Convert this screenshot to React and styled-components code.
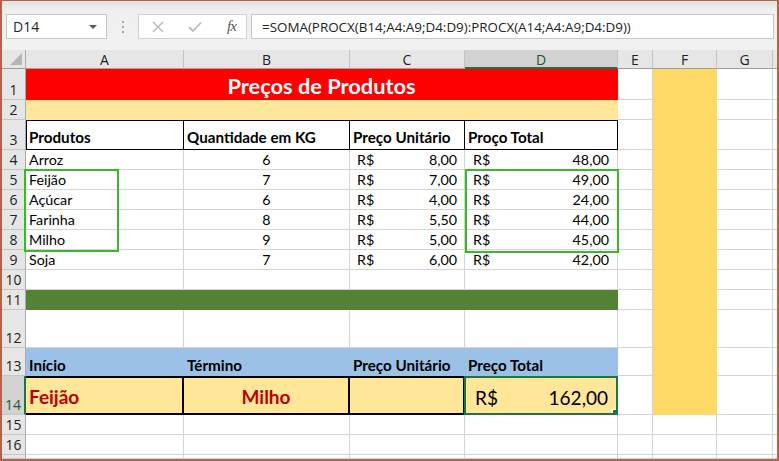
import React from "react";
import styled, { createGlobalStyle, css } from "styled-components";

const GlobalStyle = createGlobalStyle`
  html, body {
    margin: 0;
    padding: 0;
    background: #fff;
  }
  * {
    box-sizing: border-box;
  }
`;

const COL_W = [158, 166, 115, 153, 35, 64, 56];
const ROW_H = [31, 20, 30, 20, 20, 20, 20, 20, 20, 20, 20, 38, 28, 39, 20, 20];
const LETTERS = ["A", "B", "C", "D", "E", "F", "G", ""];
const GRID = "#d4d4d4";
const YELLOW = "#ffe699";
const GOLD = "#ffd966";
const BLUE = "#9bc2e6";
const XL_GREEN = "#217346";

const products = [
  ["Arroz", "6", "8,00", "48,00"],
  ["Feijão", "7", "7,00", "49,00"],
  ["Açúcar", "6", "4,00", "24,00"],
  ["Farinha", "8", "5,50", "44,00"],
  ["Milho", "9", "5,00", "45,00"],
  ["Soja", "7", "6,00", "42,00"],
];

// cell specs by sheet row; c = column index (0 = A)
const sheet = {
  1: [{ c: 0, span: 4, kind: "title", text: "Preços de Produtos" }],
  2: [{ c: 0, span: 4, kind: "fill", fill: YELLOW }],
  3: [
    { c: 0, kind: "head", text: "Produtos" },
    { c: 1, kind: "head", text: "Quantidade em KG" },
    { c: 2, kind: "head", text: "Preço Unitário" },
    { c: 3, kind: "head", text: "Proço Total" },
  ],
  11: [{ c: 0, span: 4, kind: "fill", fill: "#548235" }],
  13: [
    { c: 0, kind: "blue", text: "Início" },
    { c: 1, kind: "blue", text: "Término" },
    { c: 2, kind: "blue", text: "Preço Unitário" },
    { c: 3, kind: "blue", text: "Preço Total" },
  ],
  14: [
    { c: 0, kind: "pick", text: "Feijão" },
    { c: 1, kind: "pick", text: "Milho", center: true },
    { c: 2, kind: "pick", text: "" },
    { c: 3, kind: "total", value: "162,00" },
  ],
};

products.forEach(([name, qty, unit, total], i) => {
  sheet[4 + i] = [
    { c: 0, kind: "text", text: name },
    { c: 1, kind: "num", text: qty },
    { c: 2, kind: "money", value: unit },
    { c: 3, kind: "money", value: total, wide: true },
  ];
});

const Window = styled.div`
  width: 779px;
  height: 461px;
  border: 2px solid #b1644c;
  border-top-width: 1px;
  display: flex;
  flex-direction: column;
  overflow: hidden;
  background: #f0f0f0;
`;

const FormulaBar = styled.div`
  flex: none;
  height: 49px;
  display: flex;
  align-items: flex-start;
  padding: 13px 3px 0 4px;
  background: linear-gradient(#e2e2e2, #efefef 9px, #f1f1f1);
`;

const Box = styled.div`
  height: 25px;
  background: #fff;
  border: 1px solid #c6c6c6;
  display: flex;
  align-items: center;
  font-family: "Open Sans", "Noto Sans", sans-serif;
  font-size: 14px;
  color: #262626;
`;

const NameBox = styled(Box)`
  width: 101px;
  justify-content: space-between;
  padding: 0 9px 0 6px;
`;

const Caret = styled.span`
  width: 0;
  height: 0;
  border-left: 4px solid transparent;
  border-right: 4px solid transparent;
  border-top: 4px solid #5a5a5a;
`;

const Grip = styled.div`
  width: 2px;
  height: 25px;
  margin: 0 14px 0 15px;
  display: flex;
  flex-direction: column;
  justify-content: center;
  gap: 3px;
  span {
    width: 2px;
    height: 2px;
    background: #a8a8a8;
  }
`;

const FxBox = styled(Box)`
  width: 109px;
  border-color: #d2d2d2;
  padding-left: 13px;
  gap: 24px;
`;

const Fx = styled.span`
  font-family: "Liberation Serif", serif;
  font-style: italic;
  font-size: 15px;
  color: #555;
  margin-left: 1px;
  letter-spacing: -1px;
`;

const FormulaInput = styled(Box)`
  flex: 1;
  margin-left: 4px;
  padding-left: 10px;
  font-size: 13.4px;
  color: #222;
`;

const Sheet = styled.div`
  flex: 1;
  display: grid;
  grid-template-columns: 24px ${COL_W.map((w) => `${w}px`).join(" ")} 1fr;
  grid-template-rows: 19px ${ROW_H.map((h) => `${h}px`).join(" ")} 1fr;
  background: #fff;
  overflow: hidden;
`;

const Corner = styled.div`
  grid-row: 1;
  grid-column: 1;
  background: #e6e6e6;
  border-right: 1px solid #ababab;
  border-bottom: 1px solid #9f9f9f;
  display: flex;
  align-items: flex-end;
  justify-content: flex-end;
  padding: 0 3px 3px 0;
`;

const ColHead = styled.div`
  grid-row: 1;
  grid-column: ${(p) => p.$col};
  background: ${(p) => (p.$sel ? "#d2d2d2" : "#e6e6e6")};
  border-right: 1px solid #c4c4c4;
  border-bottom: ${(p) => (p.$sel ? `2px solid ${XL_GREEN}` : "1px solid #9f9f9f")};
  display: flex;
  align-items: center;
  justify-content: center;
  padding-top: ${(p) => (p.$sel ? "1px" : "0")};
  font-family: "Open Sans", "Noto Sans", sans-serif;
  font-size: 14px;
  color: ${(p) => (p.$sel ? "#1e5631" : "#222")};
  overflow: hidden;
`;

const RowHead = styled.div`
  grid-row: ${(p) => p.$row};
  grid-column: 1;
  background: ${(p) => (p.$sel ? "#d2d2d2" : "#e6e6e6")};
  border-right: ${(p) => (p.$sel ? `2px solid ${XL_GREEN}` : "1px solid #ababab")};
  border-bottom: 1px solid #c6c6c6;
  display: flex;
  align-items: flex-end;
  justify-content: center;
  font-family: "Open Sans", "Noto Sans", sans-serif;
  font-size: 14px;
  line-height: 18px;
  color: ${(p) => (p.$sel ? "#1e5631" : "#222")};
  overflow: hidden;
`;

const edges = {
  box: css`
    border-right: 1px solid #000;
    border-bottom: 1px solid #000;
    box-shadow: inset ${(p) => (p.$first ? "1px" : "0")} 1px 0 #000;
  `,
  thick: css`
    border-right: 2px solid #000;
    border-bottom: 2px solid #000;
    box-shadow: inset 0 2px 0 #000;
  `,
  sel: css`
    position: relative;
    z-index: 1;
    margin-left: -1px;
    border: 2px solid ${XL_GREEN};
    &::after {
      content: "";
      position: absolute;
      right: -5px;
      bottom: -5px;
      width: 7px;
      height: 7px;
      background: ${XL_GREEN};
      border: 1px solid #fff;
    }
  `,
};

const Cell = styled.div`
  grid-row: ${(p) => p.$row};
  grid-column: ${(p) => p.$col} / span ${(p) => p.$span || 1};
  background: ${(p) => p.$fill || "#fff"};
  border-right: 1px solid ${(p) => p.$fill || GRID};
  border-bottom: 1px solid ${(p) => p.$fill || GRID};
  display: flex;
  align-items: ${(p) => (p.$middle ? "center" : "flex-end")};
  justify-content: ${(p) => p.$align || "flex-start"};
  gap: 8px;
  padding: ${(p) => p.$pad || "0 3px 1px 3px"};
  font-family: Lato, "Open Sans", sans-serif;
  font-size: ${(p) => p.$size || (p.$bold ? 15.2 : 14.3)}px;
  font-weight: ${(p) => (p.$bold ? 700 : 400)};
  color: ${(p) => p.$color || "#000"};
  white-space: nowrap;
  overflow: hidden;
  ${(p) => p.$edge && edges[p.$edge]}
`;

const Highlight = styled.div`
  grid-row: 6 / 10;
  grid-column: ${(p) => p.$col};
  justify-self: ${(p) => (p.$width ? "start" : "stretch")};
  width: ${(p) => (p.$width ? `${p.$width}px` : "auto")};
  margin: ${(p) => p.$margin};
  border: 2px solid #3db52c;
  position: relative;
  z-index: 2;
  pointer-events: none;
`;

const Triangle = () => (
  <svg width="12" height="12" viewBox="0 0 12 12">
    <polygon points="12,0 12,12 0,12" fill="#b5b5b5" />
  </svg>
);

const Cross = () => (
  <svg width="12" height="12" viewBox="0 0 12 12">
    <path d="M1 1 L11 11 M11 1 L1 11" stroke="#b9b9b9" strokeWidth="1.4" />
  </svg>
);

const Check = () => (
  <svg width="14" height="12" viewBox="0 0 14 12">
    <path d="M1 6 L5 10 L13 1.5" stroke="#b9b9b9" strokeWidth="1.8" fill="none" />
  </svg>
);

function renderCell(spec, r, c) {
  const row = r + 1;
  const col = c + 2;
  const key = `${r}-${c}`;
  switch (spec.kind) {
    case "title":
      return (
        <Cell key={key} $row={row} $col={col} $span={spec.span} $fill="#ff0000"
          $align="center" $middle $pad="2px 0 0" $bold $size={21.8} $color="#fff">
          {spec.text}
        </Cell>
      );
    case "fill":
      return <Cell key={key} $row={row} $col={col} $span={spec.span} $fill={spec.fill} />;
    case "head":
      return (
        <Cell key={key} $row={row} $col={col} $bold $edge="box" $first={c === 0} $pad="0 3px 3px 3px">
          {spec.text}
        </Cell>
      );
    case "blue":
      return (
        <Cell key={key} $row={row} $col={col} $fill={BLUE} $bold $pad="0 3px 1px 3px">
          {spec.text}
        </Cell>
      );
    case "num":
      return (
        <Cell key={key} $row={row} $col={col} $align="center">
          {spec.text}
        </Cell>
      );
    case "money":
      return (
        <Cell key={key} $row={row} $col={col} $align="space-between"
          $pad={spec.wide ? "0 8px 1px 8px" : "0 7px 1px 7px"}>
          <span>R$</span>
          <span>{spec.value}</span>
        </Cell>
      );
    case "pick":
      return (
        <Cell key={key} $row={row} $col={col} $fill={YELLOW} $edge="thick" $middle
          $align={spec.center ? "center" : "flex-start"} $pad="3px 3px 0 3px"
          $bold $size={19} $color="#c00000">
          {spec.text}
        </Cell>
      );
    case "total":
      return (
        <Cell key={key} $row={row} $col={col} $fill={YELLOW} $edge="sel" $middle
          $align="space-between" $pad="3px 8px 0 9px" $size={19}>
          <span>R$</span>
          <span>{spec.value}</span>
        </Cell>
      );
    default:
      return (
        <Cell key={key} $row={row} $col={col}>
          {spec.text}
        </Cell>
      );
  }
}

function SheetBody() {
  const items = [];
  const rows = ROW_H.length + 1;
  for (let r = 1; r <= rows; r++) {
    items.push(
      <RowHead key={`rh-${r}`} $row={r + 1} $sel={r === 14}>
        {r <= ROW_H.length ? r : ""}
      </RowHead>
    );
    const specs = sheet[r] || [];
    let c = 0;
    while (c < LETTERS.length) {
      if (c === 5 && r <= 14) {
        c += 1;
        continue;
      }
      const spec = specs.find((s) => s.c === c);
      if (spec) {
        items.push(renderCell(spec, r, c));
        c += spec.span || 1;
      } else {
        items.push(<Cell key={`${r}-${c}`} $row={r + 1} $col={c + 2} />);
        c += 1;
      }
    }
  }
  return items;
}

export default function App() {
  return (
    <>
      <GlobalStyle />
      <Window>
        <FormulaBar>
          <NameBox>
            D14
            <Caret />
          </NameBox>
          <Grip>
            <span />
            <span />
            <span />
          </Grip>
          <FxBox>
            <Cross />
            <Check />
            <Fx>fx</Fx>
          </FxBox>
          <FormulaInput>=SOMA(PROCX(B14;A4:A9;D4:D9):PROCX(A14;A4:A9;D4:D9))</FormulaInput>
        </FormulaBar>
        <Sheet>
          <Corner>
            <Triangle />
          </Corner>
          {LETTERS.map((l, i) => (
            <ColHead key={`ch-${i}`} $col={i + 2} $sel={l === "D"}>
              {l}
            </ColHead>
          ))}
          <SheetBody />
          <Cell $row="2 / 16" $col={7} $fill={GOLD} />
          <Highlight $col={2} $width={95} $margin="-1px 0 -2px -2px" />
          <Highlight $col={5} $margin="-1px -1px -3px 0" />
        </Sheet>
      </Window>
    </>
  );
}
